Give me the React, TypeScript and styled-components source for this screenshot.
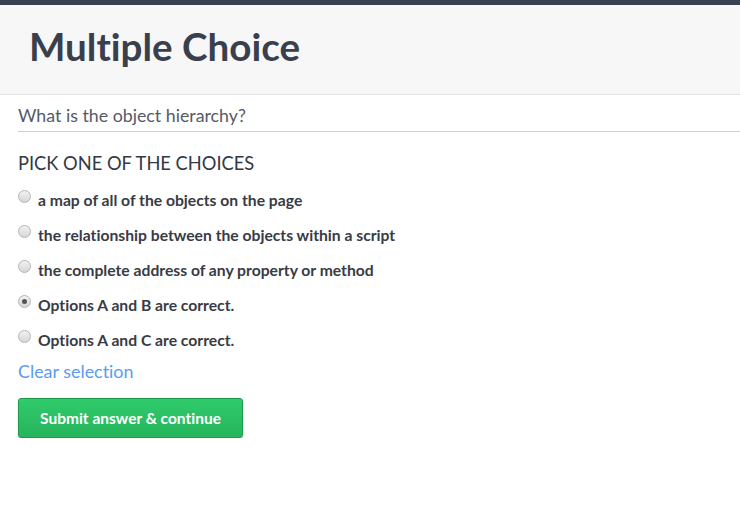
import { useState } from 'react'
import styled, { createGlobalStyle } from 'styled-components'

const GlobalStyle = createGlobalStyle`
  html, body {
    margin: 0;
    padding: 0;
    background: #fff;
    font-family: Lato, "Open Sans", sans-serif;
  }
  * {
    font-variant-ligatures: none;
    font-feature-settings: "liga" 0;
  }
`

const TopBar = styled.div`
  height: 5px;
  background: #3a4151;
`

const Header = styled.header`
  background: #f7f7f7;
  border-bottom: 1px solid #e1e1e1;
  height: 90px;
  box-sizing: border-box;
  padding: 18px 0 0 29px;
`

const Title = styled.h1`
  margin: 0;
  font-size: 38.6px;
  line-height: 46px;
  font-weight: 700;
  color: #393f4c;
`

const Main = styled.main`
  padding-left: 18px;
`

const Question = styled.div`
  font-size: 17.8px;
  line-height: 22px;
  color: #555a66;
  padding: 9px 0 5px;
  border-bottom: 1px solid #cfcfcf;
`

const Prompt = styled.h2`
  margin: 20px 0 8px;
  font-size: 18.3px;
  line-height: 22px;
  font-weight: 400;
  color: #333842;
`

const ChoiceList = styled.div`
  display: flex;
  flex-direction: column;
`

const Choice = styled.label`
  display: flex;
  align-items: center;
  height: 35px;
  gap: 7px;
  font-size: 15.7px;
  font-weight: 700;
  color: #383b45;
  cursor: pointer;
`

const Radio = styled.span<{ $checked: boolean }>`
  width: 11px;
  height: 11px;
  border-radius: 50%;
  border: 1px solid #b5b5b5;
  background: linear-gradient(#f2f2f2, #d6d6d6);
  position: relative;
  top: -3px;
  flex: none;

  &::after {
    content: '';
    display: ${p => (p.$checked ? 'block' : 'none')};
    position: absolute;
    left: 3px;
    top: 3px;
    width: 5px;
    height: 5px;
    border-radius: 50%;
    background: #555;
  }
`

const ClearLink = styled.a`
  display: inline-block;
  margin-top: 3px;
  font-size: 17.9px;
  line-height: 22px;
  color: #5b9cf2;
  text-decoration: none;
  cursor: pointer;
`

const SubmitButton = styled.button`
  display: block;
  margin-top: 16px;
  width: 225px;
  height: 40px;
  border: 1px solid #1f9a4c;
  border-radius: 3px;
  background: linear-gradient(#2fcb6b, #27b45c);
  color: #fff;
  font-family: Lato, sans-serif;
  font-size: 15.5px;
  font-weight: 700;
  box-shadow: 0 1px 2px rgba(0, 0, 0, 0.2);
  cursor: pointer;
`

const choices = [
  'a map of all of the objects on the page',
  'the relationship between the objects within a script',
  'the complete address of any property or method',
  'Options A and B are correct.',
  'Options A and C are correct.',
]

export default function App() {
  const [selected, setSelected] = useState<number | null>(3)

  return (
    <>
      <GlobalStyle />
      <TopBar />
      <Header>
        <Title>Multiple Choice</Title>
      </Header>
      <Main>
        <Question>What is the object hierarchy?</Question>
        <Prompt>PICK ONE OF THE CHOICES</Prompt>
        <ChoiceList>
          {choices.map((c, i) => (
            <Choice key={c} onClick={() => setSelected(i)}>
              <Radio $checked={selected === i} />
              {c}
            </Choice>
          ))}
        </ChoiceList>
        <ClearLink onClick={() => setSelected(null)}>Clear selection</ClearLink>
        <SubmitButton>Submit answer &amp; continue</SubmitButton>
      </Main>
    </>
  )
}
